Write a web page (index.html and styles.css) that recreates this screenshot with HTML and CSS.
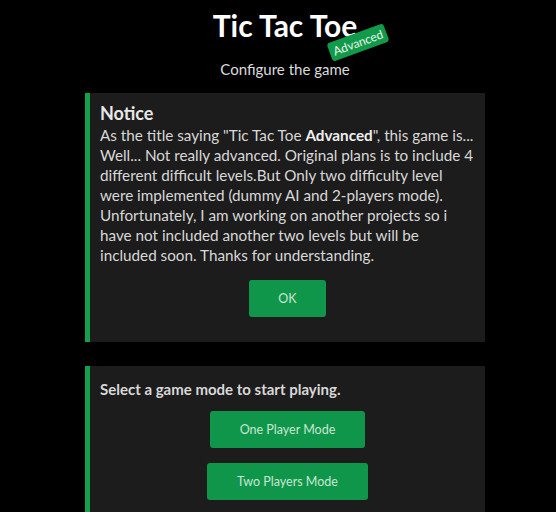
FILE: index.html
```html
<!DOCTYPE html>
<html lang="en">
<head>
<meta charset="utf-8">
<title>Tic Tac Toe Advanced</title>
<link rel="stylesheet" href="styles.css">
</head>
<body>
<main class="page">
  <header class="header">
    <h1 class="title">Tic Tac Toe<span class="badge">Advanced</span></h1>
    <p class="subtitle">Configure the game</p>
  </header>
  <section class="card notice">
    <h2 class="card-title">Notice</h2>
    <p class="card-text">As the title saying "Tic Tac Toe <b>Advanced</b>", this game is... Well... Not really advanced. Original plans is to include 4 different difficult levels.But Only two difficulty level were implemented (dummy AI and 2-players mode). Unfortunately, I am working on another projects so i have not included another two levels but will be included soon. Thanks for understanding.</p>
    <div class="actions">
      <button class="btn btn-ok">OK</button>
    </div>
  </section>
  <section class="card modes">
    <p class="card-lead">Select a game mode to start playing.</p>
    <div class="actions stack">
      <button class="btn btn-one">One Player Mode</button>
      <button class="btn btn-two">Two Players Mode</button>
    </div>
  </section>
</main>
</body>
</html>
```

FILE: styles.css
```css
html, body {
  margin: 0;
  padding: 0;
  background: #000;
}
body {
  font-family: Lato, "Noto Sans", sans-serif;
  color: #d8d8d8;
  padding-left: 14px;
}
.page {
  width: 400px;
  margin: 0 auto;
}
.header {
  text-align: center;
  padding-top: 6px;
}
.title {
  position: relative;
  display: inline-block;
  margin: 0;
  font-size: 30px;
  line-height: 38px;
  font-weight: 700;
  color: #fff;
}
.badge {
  position: absolute;
  left: 115px;
  top: 27px;
  background: #129a4b;
  color: #e8f5ea;
  font-size: 12px;
  font-weight: 400;
  line-height: 15px;
  padding: 2px 4px;
  border-radius: 3px;
  transform: rotate(-20deg);
  white-space: nowrap;
}
.subtitle {
  margin: 15px 0 14px;
  font-size: 15px;
  line-height: 20px;
  color: #dcdcdc;
}
.card {
  background: #1c1c1c;
  border-left: 5px solid #12a04c;
  padding: 8px 10px 25px 10px;
  margin-bottom: 24px;
}
.card-title {
  margin: 0;
  font-size: 18px;
  line-height: 24px;
  font-weight: 700;
  color: #e8e8e8;
}
.card-text {
  margin: 0;
  font-size: 15.25px;
  line-height: 20px;
}
.card-text b {
  font-weight: 700;
  color: #f0f0f0;
}
.card-lead {
  margin: 4px 0 0;
  font-size: 15px;
  line-height: 22px;
  font-weight: 700;
}
.actions {
  display: flex;
  justify-content: center;
  margin-top: 15px;
}
.stack {
  flex-direction: column;
  align-items: center;
  gap: 15px;
  margin-top: 11px;
}
.btn {
  background: #10964a;
  color: #c9e6d2;
  border: none;
  border-radius: 3px;
  height: 37px;
  font-family: inherit;
  font-size: 12.5px;
  padding: 0;
}
.btn-ok { width: 77px; }
.btn-one { width: 155px; }
.btn-two { width: 161px; }
```
